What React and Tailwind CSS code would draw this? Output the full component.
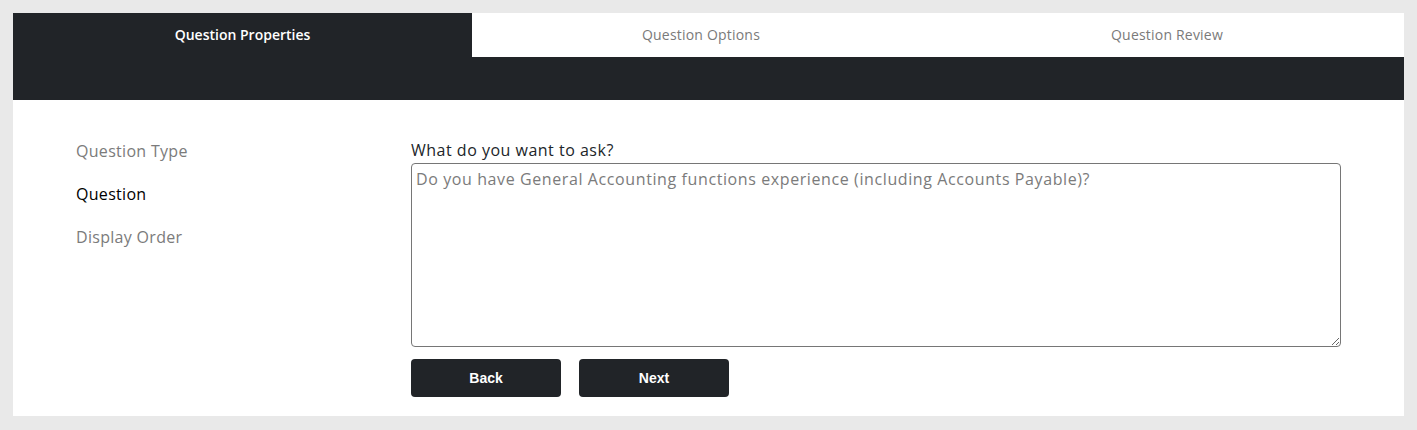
const TABS = [
  { label: 'Question Properties', width: 'w-[459px]' },
  { label: 'Question Options', width: 'w-[458px]' },
  { label: 'Question Review', width: 'flex-1' },
]
const STEPS = ['Question Type', 'Question', 'Display Order']

export default function App() {
  const active = 0
  const current = 1

  return (
    <div className="min-h-[430px] bg-[#e9e9e9] p-[13px] font-['Open_Sans',sans-serif]">
      <div className="bg-white">
        <div className="h-[87px] bg-[#212428]">
          <div className="flex h-[44px]">
            {TABS.map((t, i) => (
              <div
                key={t.label}
                className={
                  (i === active
                    ? 'bg-[#212428] font-semibold text-white'
                    : 'bg-white text-[#7a7a7a] tracking-[0.2px]') +
                  ' flex items-center justify-center pb-[2px] text-[14px] ' +
                  t.width
                }
              >
                {t.label}
              </div>
            ))}
          </div>
        </div>

        <div className="flex px-[63px] pt-[38px] pb-[19px]">
          <div className="flex w-[335px] shrink-0 flex-col gap-[19px] pt-px">
            {STEPS.map((s, i) => (
              <div
                key={s}
                className={
                  i === current
                    ? 'text-[16px] leading-6 tracking-[0.3px] text-black'
                    : 'text-[16px] leading-6 tracking-[0.3px] text-[#7b7b7b]'
                }
              >
                {s}
              </div>
            ))}
          </div>

          <div className="flex-1">
            <label className="block text-[16px] leading-6 tracking-[0.5px] text-[#212529]">
              What do you want to ask?
            </label>
            <textarea
              className="mt-px block h-[184px] w-full rounded-[4px] border border-[#767676] px-[4px] py-[3px] text-[16px] leading-6 tracking-[0.6px] text-[#212529] placeholder:text-[#7b7b7b] focus:outline-none"
              placeholder="Do you have General Accounting functions experience (including Accounts Payable)?"
            />
            <div className="mt-3 flex gap-[18px]">
              <button className="h-[38px] w-[150px] rounded-[4px] bg-[#212428] pt-px font-['Liberation_Sans',sans-serif] text-[14px] font-bold text-white">
                Back
              </button>
              <button className="h-[38px] w-[150px] rounded-[4px] bg-[#212428] pt-px font-['Liberation_Sans',sans-serif] text-[14px] font-bold text-white">
                Next
              </button>
            </div>
          </div>
        </div>
      </div>
    </div>
  )
}
